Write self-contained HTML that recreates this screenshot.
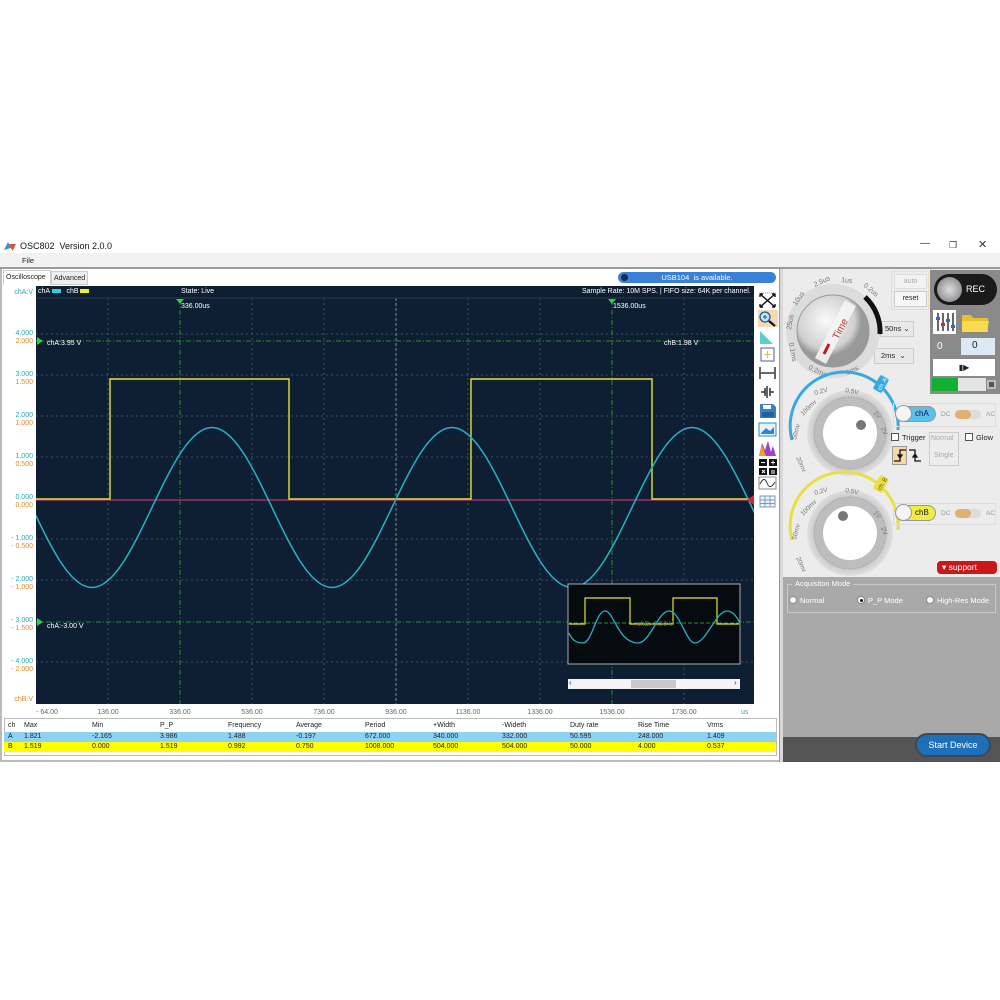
<!DOCTYPE html>
<html><head><meta charset="utf-8">
<style>
*{margin:0;padding:0;box-sizing:border-box}
body{width:1000px;height:1000px;background:#fff;position:relative;overflow:hidden;font-family:"Liberation Sans",sans-serif;font-size:8px;color:#222}
.a{position:absolute;white-space:nowrap}
.yl{position:absolute;right:967px;font-size:7px;text-align:right;line-height:8px}
.c{color:#2aa6b8}.o{color:#e08a2a}
.xl{position:absolute;top:709px;font-size:7px;color:#666;transform:translateX(-50%)}
.tb{position:absolute;left:4px;width:772px;height:10px;font-size:7px;line-height:10px}
.tb span{position:absolute}
</style></head><body>

<svg class="a" style="left:3px;top:240px" width="14" height="12"><path d="M1 10 L5 2 L8 8Z" fill="#3a8fd0"/><path d="M6 4 L13 4 L9.5 11Z" fill="#e0502a"/></svg>
<div class="a" style="left:20px;top:241px;font-size:9px;color:#111">OSC802&nbsp; Version 2.0.0</div>
<div class="a" style="left:920px;top:238px;font-size:10px;color:#333">—</div>
<div class="a" style="left:949px;top:240px;font-size:9px;color:#333">❐</div>
<div class="a" style="left:978px;top:238px;font-size:11px;color:#333">✕</div>
<div class="a" style="left:0;top:253px;width:1000px;height:15px;background:#f2f2f2"></div>
<div class="a" style="left:22px;top:256px;font-size:7.5px">File</div>
<div class="a" style="left:0;top:267px;width:1000px;height:2px;background:#9a9a9a"></div>
<div class="a" style="left:0;top:269px;width:2px;height:493px;background:#bbb"></div>
<div class="a" style="left:3px;top:270px;width:48px;height:15px;background:#fff;border:1px solid #ccc;border-bottom:none;font-size:7px;padding:3px 2px">Oscilloscope</div>
<div class="a" style="left:51px;top:271px;width:37px;height:14px;background:#eee;border:1px solid #ccc;font-size:7px;padding:3px 2px">Advanced</div>
<div class="a" style="left:618px;top:272px;width:158px;height:11px;background:#3a7fd8;border-radius:6px;color:#fff;font-size:7.5px;line-height:11px;text-align:center">USB104&nbsp; is available.</div>
<div class="a" style="left:621px;top:274px;width:7px;height:7px;border-radius:50%;background:#1a2a50"></div>

<svg class="a" style="left:36px;top:286px" width="718" height="418" viewBox="36 286 718 418">
<rect x="36" y="286" width="718" height="418" fill="#0f1f33"/>
<g stroke="#4e5f70" stroke-width="0.8" stroke-dasharray="2 3">
<line x1="108" y1="298" x2="108" y2="704"/><line x1="252" y1="298" x2="252" y2="704"/><line x1="324" y1="298" x2="324" y2="704"/><line x1="396" y1="298" x2="396" y2="704"/><line x1="468" y1="298" x2="468" y2="704"/><line x1="540" y1="298" x2="540" y2="704"/><line x1="684" y1="298" x2="684" y2="704"/>
<line x1="36" y1="334" x2="754" y2="334"/><line x1="36" y1="375" x2="754" y2="375"/><line x1="36" y1="416" x2="754" y2="416"/><line x1="36" y1="457" x2="754" y2="457"/><line x1="36" y1="539" x2="754" y2="539"/><line x1="36" y1="580" x2="754" y2="580"/><line x1="36" y1="662" x2="754" y2="662"/>
</g>
<line x1="396" y1="298" x2="396" y2="704" stroke="#8a98a8" stroke-width="0.8" stroke-dasharray="3 2"/>
<g stroke="#2e8a3a" stroke-width="1" stroke-dasharray="5 2 1 2">
<line x1="180" y1="300" x2="180" y2="704"/><line x1="612" y1="300" x2="612" y2="704"/>
<line x1="36" y1="341" x2="754" y2="341"/><line x1="36" y1="622" x2="754" y2="622"/>
</g>
<line x1="36" y1="298" x2="754" y2="298" stroke="#2a3a4e" stroke-width="1"/>
<line x1="36" y1="500" x2="754" y2="500" stroke="#a0306a" stroke-width="1.5"/>
<path d="M36 499 H110 V379 H289 V499 H471 V379 H652 V499 H754" fill="none" stroke="#e8e030" stroke-width="1.4"/>
<path d="M-28 427.5 C15.7 427.5 48.3 587.5 92 587.5 C135.7 587.5 168.3 427.5 212 427.5 C255.7 427.5 288.3 587.5 332 587.5 C375.7 587.5 408.3 427.5 452 427.5 C495.7 427.5 528.3 587.5 572 587.5 C615.7 587.5 648.3 427.5 692 427.5 C735.7 427.5 768.3 587.5 812 587.5" fill="none" stroke="#2bb0c4" stroke-width="1.5"/>
<path d="M176 299 L184 299 L180 304Z" fill="#2fd040"/><path d="M608 299 L616 299 L612 304Z" fill="#2fd040"/>
<path d="M37 337 L37 345 L43 341Z" fill="#2fd040"/><path d="M37 618 L37 626 L43 622Z" fill="#2fd040"/>
<path d="M754 495 L747 500 L754 505Z" fill="#e02030"/>
<rect x="568" y="584" width="172" height="80" fill="#060b10" stroke="#aaa" stroke-width="1"/>
<line x1="568" y1="623" x2="740" y2="623" stroke="#2e8a3a" stroke-dasharray="4 2"/>
<path d="M569 624 H585 V598 H630 V624 H673 V598 H717 V624 H739" fill="none" stroke="#e8e030" stroke-width="1.2"/>
<path d="M569 633 C572 640 576 643 583 643 C592 643 596 611 605 611 C614 611 618 643 638 643 C650 643 658 611 669 611 C680 611 686 643 695 643 C706 643 716 611 727 611 C733 611 737 617 740 623" fill="none" stroke="#2bb0c4" stroke-width="1.3"/>
<rect x="568" y="679" width="172" height="10" fill="#f4f4f4"/><rect x="631" y="680" width="45" height="8" fill="#c8c8c8"/>
</svg>
<div class="a" style="left:38px;top:288px;font-size:7px;color:#fff">chA <span style="display:inline-block;width:9px;height:4px;background:#2ad0e0"></span>&nbsp;&nbsp; chB <span style="display:inline-block;width:9px;height:4px;background:#f0f020"></span></div>
<div class="a" style="left:181px;top:288px;font-size:7px;color:#fff">State: Live</div>
<div class="a" style="left:582px;top:288px;font-size:7px;color:#fff">Sample Rate: 10M SPS. | FIFO size: 64K per channel.</div>
<div class="a" style="left:181px;top:303px;font-size:7px;color:#fff">336.00us</div>
<div class="a" style="left:613px;top:303px;font-size:7px;color:#fff">1536.00us</div>
<div class="a" style="left:47px;top:340px;font-size:7px;color:#fff">chA:3.95 V</div>
<div class="a" style="left:664px;top:340px;font-size:7px;color:#fff">chB:1.98 V</div>
<div class="a" style="left:47px;top:623px;font-size:7px;color:#fff">chA:-3.00 V</div>
<div class="a" style="left:637px;top:621px;font-size:7px;color:#666">chB:-1.50 V</div>
<div class="a" style="left:569px;top:678px;font-size:8px;color:#333">‹</div><div class="a" style="left:734px;top:678px;font-size:8px;color:#333">›</div>

<div class="yl c" style="top:289px">chA:V</div>
<div class="yl c" style="top:330px">4.000</div><div class="yl o" style="top:338px">2.000</div>
<div class="yl c" style="top:371px">3.000</div><div class="yl o" style="top:379px">1.500</div>
<div class="yl c" style="top:412px">2.000</div><div class="yl o" style="top:420px">1.000</div>
<div class="yl c" style="top:453px">1.000</div><div class="yl o" style="top:461px">0.500</div>
<div class="yl c" style="top:494px">0.000</div><div class="yl o" style="top:502px">0.000</div>
<div class="yl c" style="top:535px">- 1.000</div><div class="yl o" style="top:543px">- 0.500</div>
<div class="yl c" style="top:576px">- 2.000</div><div class="yl o" style="top:584px">- 1.000</div>
<div class="yl c" style="top:617px">- 3.000</div><div class="yl o" style="top:625px">- 1.500</div>
<div class="yl c" style="top:658px">- 4.000</div><div class="yl o" style="top:666px">- 2.000</div>
<div class="yl o" style="top:696px">chB:V</div>
<div class="xl" style="left:47px">- 64.00</div><div class="xl" style="left:108px">136.00</div><div class="xl" style="left:180px">336.00</div><div class="xl" style="left:252px">536.00</div><div class="xl" style="left:324px">736.00</div><div class="xl" style="left:396px">936.00</div><div class="xl" style="left:468px">1136.00</div><div class="xl" style="left:540px">1336.00</div><div class="xl" style="left:612px">1536.00</div><div class="xl" style="left:684px">1736.00</div>
<div class="a" style="left:741px;top:709px;font-size:7px;color:#2aa6b8">us</div>

<svg class="a" style="left:757px;top:290px" width="22" height="222" viewBox="757 290 22 222">
<line x1="759" y1="293" x2="777" y2="293" stroke="#999" stroke-dasharray="1 1"/>
<g stroke="#111" stroke-width="1.4" fill="none"><path d="M760 294 L775 307 M775 294 L760 307"/><path d="M760 294h3M760 294v3M775 294h-3M775 294v3M760 307h3M760 307v-3M775 307h-3M775 307v-3"/></g>
<rect x="758" y="310" width="20" height="17" fill="#f8d8b0"/>
<circle cx="765" cy="317" r="5" fill="#bfe4f8" stroke="#1a5a9a" stroke-width="1.3"/><path d="M769 321 L775 326" stroke="#111" stroke-width="2.2"/><path d="M763 317h4M765 315v4" stroke="#1a5a9a"/>
<path d="M760 344 V331 L773 344Z" fill="#5ccdd0"/>
<rect x="761" y="348" width="13" height="13" fill="none" stroke="#7070c8" stroke-width="1.2"/><path d="M767.5 351v7M764 354.5h7" stroke="#e0c040"/>
<g stroke="#111" stroke-width="1.3"><path d="M760 367v12M775 367v12M761 373h13"/><path d="M767 386v12M761 392h4M770 392h4"/><path d="M765 388v8M770 388v8" /></g>
<path d="M760 404h13l3 3v11h-16z" fill="#3a80c8"/><rect x="763" y="405" width="8" height="4" fill="#fff"/><rect x="762" y="412" width="12" height="5" fill="#2060a0"/>
<rect x="759" y="423" width="17" height="13" fill="#e8f4fc" stroke="#2a8ad0"/><path d="M761 433 L766 428 L770 431 L774 427 V434 H761Z" fill="#2a8ad0"/>
<path d="M759 456 L762 443 L765 450 L768 441 L771 452 L773 446 L776 456Z" fill="#a040c8"/><path d="M759 456 L762 445 L766 456Z" fill="#f0a020"/>
<g fill="#111"><rect x="759" y="459" width="8" height="7"/><rect x="769" y="459" width="8" height="7"/><rect x="759" y="468" width="8" height="7"/><rect x="769" y="468" width="8" height="7"/></g>
<path d="M761 462.5h4M771 462.5h4M773 460.5v4M762 470l3 3M765 470l-3 3M771 471h4M771 473h4" stroke="#fff"/>
<rect x="759" y="477" width="17" height="12" fill="none" stroke="#888"/><path d="M760 484 C763 478 765 478 767 483 C769 488 771 488 775 482" fill="none" stroke="#333"/>
<rect x="760" y="496" width="15" height="11" fill="#eef4fa" stroke="#7a9ac0"/><path d="M760 500h15M760 503.5h15M765 496v11M770 496v11" stroke="#7a9ac0"/>
</svg>

<div class="a" style="left:4px;top:718px;width:773px;height:38px;border:1px solid #bbb;background:#fff"></div>
<div class="tb" style="top:721px"><span style="left:4px">ch</span><span style="left:20px">Max</span><span style="left:88px">Min</span><span style="left:156px">P_P</span><span style="left:224px">Frequency</span><span style="left:292px">Average</span><span style="left:361px">Period</span><span style="left:429px">+Width</span><span style="left:498px">-Wideth</span><span style="left:566px">Duty rate</span><span style="left:634px">Rise Time</span><span style="left:703px">Vrms</span></div>
<div class="tb" style="top:732px;background:#8ed2f4"><span style="left:4px">A</span><span style="left:20px">1.821</span><span style="left:88px">-2.165</span><span style="left:156px">3.986</span><span style="left:224px">1.488</span><span style="left:292px">-0.197</span><span style="left:361px">672.000</span><span style="left:429px">340.000</span><span style="left:498px">332.000</span><span style="left:566px">50.595</span><span style="left:634px">248.000</span><span style="left:703px">1.409</span></div>
<div class="tb" style="top:742px;background:#ffff00"><span style="left:4px">B</span><span style="left:20px">1.519</span><span style="left:88px">0.000</span><span style="left:156px">1.519</span><span style="left:224px">0.992</span><span style="left:292px">0.750</span><span style="left:361px">1008.000</span><span style="left:429px">504.000</span><span style="left:498px">504.000</span><span style="left:566px">50.000</span><span style="left:634px">4.000</span><span style="left:703px">0.537</span></div>
<div class="a" style="left:0;top:760px;width:782px;height:2px;background:#bbb"></div>

<div class="a" style="left:779px;top:269px;width:4px;height:493px;background:#d8d8d8;border-left:1px solid #999"></div>
<div class="a" style="left:783px;top:269px;width:217px;height:308px;background:#ececec"></div>
<div class="a" style="left:783px;top:577px;width:217px;height:160px;background:#a9a9a9"></div>
<div class="a" style="left:783px;top:737px;width:217px;height:25px;background:#555"></div>
<div class="a" style="left:915px;top:733px;width:76px;height:24px;border-radius:12px;background:#1e6fb8;border:2px solid #3a4a5a;color:#fff;font-size:9px;line-height:20px;text-align:center">Start Device</div>
<div class="a" style="left:787px;top:584px;width:209px;height:29px;border:1px solid #c8c8c8"></div>
<div class="a" style="left:792px;top:579px;background:#a9a9a9;color:#fff;font-size:7.5px;padding:0 3px">Acquisiton Mode</div>
<div class="a" style="left:789px;top:596px;width:8px;height:8px;border-radius:50%;background:#fff;border:1px solid #888"></div>
<div class="a" style="left:800px;top:596px;color:#fff;font-size:7.5px">Normal</div>
<div class="a" style="left:857px;top:596px;width:8px;height:8px;border-radius:50%;background:#fff;border:1px solid #888"><div style="margin:1.5px;width:3px;height:3px;border-radius:50%;background:#111"></div></div>
<div class="a" style="left:868px;top:596px;color:#fff;font-size:7.5px">P_P Mode</div>
<div class="a" style="left:926px;top:596px;width:8px;height:8px;border-radius:50%;background:#fff;border:1px solid #888"></div>
<div class="a" style="left:937px;top:596px;color:#fff;font-size:7.5px">High-Res Mode</div>

<div class="a" style="left:930px;top:270px;width:70px;height:124px;background:#8a8a8a"></div>
<div class="a" style="left:934px;top:274px;width:63px;height:31px;border-radius:16px;background:#1a1a1a"></div>
<div class="a" style="left:937px;top:277px;width:25px;height:25px;border-radius:50%;background:radial-gradient(#ddd,#777)"></div>
<div class="a" style="left:966px;top:284px;color:#fff;font-size:9px">REC</div>
<div class="a" style="left:933px;top:310px;width:23px;height:24px;background:#fff"></div>
<svg class="a" style="left:934px;top:311px" width="22" height="22"><g stroke="#333" stroke-width="1.5"><path d="M4 2v18M9 2v18M14 2v18M19 2v18"/></g><rect x="2" y="6" width="4" height="3" fill="#2a6ad0"/><rect x="7" y="12" width="4" height="3" fill="#d02a2a"/><rect x="12" y="8" width="4" height="3" fill="#2a6ad0"/><rect x="17" y="14" width="4" height="3" fill="#2a6ad0"/></svg>
<svg class="a" style="left:961px;top:311px" width="30" height="24"><path d="M1 4h9l2 3h15v14H1z" fill="#e8c030"/><path d="M1 10h27l-2 11H1z" fill="#f8dc50"/></svg>
<div class="a" style="left:937px;top:341px;color:#fff;font-size:10px">0</div>
<div class="a" style="left:961px;top:338px;width:34px;height:17px;background:#dce8f4;font-size:10px;padding:2px 0 0 11px">0</div>
<div class="a" style="left:933px;top:359px;width:62px;height:17px;background:#fff;font-size:8px;text-align:center;line-height:17px">▮▶</div>
<div class="a" style="left:932px;top:378px;width:26px;height:13px;background:#11b030"></div>
<div class="a" style="left:958px;top:378px;width:28px;height:13px;background:#e4e4e4"></div>
<div class="a" style="left:987px;top:380px;width:9px;height:9px;background:#555;border:2px solid #bbb"></div>
<div class="a" style="left:891px;top:271px;width:38px;height:39px;border:1px solid #f0dcc0"></div>
<div class="a" style="left:894px;top:274px;width:33px;height:15px;border:1px solid #ddd;background:#f2f2f2;color:#aaa;font-size:7px;text-align:center;line-height:13px">auto</div>
<div class="a" style="left:894px;top:291px;width:33px;height:16px;border:1px solid #ccc;background:#f6f6f6;font-size:7px;text-align:center;line-height:14px">reset</div>
<div class="a" style="left:880px;top:321px;width:34px;height:16px;border:1px solid #ccc;background:#e8e8e8;font-size:7.5px;line-height:14px;padding-left:4px">50ns ⌄</div>
<div class="a" style="left:874px;top:348px;width:40px;height:16px;border:1px solid #ccc;background:#e8e8e8;font-size:7.5px;line-height:14px;padding-left:6px">2ms &nbsp;⌄</div>

<svg class="a" style="left:783px;top:269px" width="145" height="310" viewBox="783 269 145 310">
<defs>
<radialGradient id="g1" cx="0.4" cy="0.35"><stop offset="0" stop-color="#fafafa"/><stop offset="0.8" stop-color="#d0d0d0"/><stop offset="1" stop-color="#999"/></radialGradient>
<radialGradient id="g2"><stop offset="0.7" stop-color="#b8b8b8"/><stop offset="1" stop-color="#e0e0e0"/></radialGradient>
</defs>
<circle cx="833" cy="331" r="47" fill="#dcdcdc"/>
<path d="M865 297 A47 47 0 0 1 880 334" stroke="#111" stroke-width="5" fill="none"/>
<circle cx="833" cy="331" r="36" fill="url(#g1)" stroke="#999"/>
<path d="M815 358 L845 300 L856 306 L826 364Z" fill="#f4f4f4" opacity="0.9"/>
<text x="0" y="0" transform="translate(838 340) rotate(-62)" font-size="10" fill="#c03030" font-family="Liberation Sans">Time</text>
<path d="M824 354 L829 344" stroke="#c01818" stroke-width="3"/>
<g font-size="7" fill="#777" font-family="Liberation Sans">
<text transform="translate(796 306) rotate(-55)">10us</text>
<text transform="translate(815 287) rotate(-25)">2.5us</text>
<text transform="translate(841 282) rotate(5)">1us</text>
<text transform="translate(863 286) rotate(40)">0.2us</text>
<text transform="translate(791 330) rotate(-80)">25us</text>
<text transform="translate(789 343) rotate(80)">0.1ms</text>
<text transform="translate(808 369) rotate(25)">0.2ms</text>
<text transform="translate(847 375) rotate(-25)">1ms</text>
</g>
<path d="M792 440 A54 54 0 1 1 898 430" stroke="#3aa8e0" stroke-width="3" fill="none"/>
<rect x="873" y="379" width="16" height="10" rx="2" fill="#3aa8e0" transform="rotate(-60 881 384)"/>
<text x="875" y="387" font-size="6" fill="#fff" transform="rotate(-60 881 384)">ch. A</text>
<circle cx="850" cy="433" r="43" fill="url(#g2)"/>
<circle cx="850" cy="433" r="36" fill="#bdbdbd" stroke="#999" stroke-dasharray="1 1.5"/>
<circle cx="850" cy="433" r="27" fill="#fff"/>
<circle cx="861" cy="425" r="5" fill="#777"/>
<path d="M792 540 A54 54 0 1 1 898 530" stroke="#e8e040" stroke-width="3" fill="none"/>
<rect x="873" y="479" width="16" height="10" rx="2" fill="#e8e040" transform="rotate(-60 881 484)"/>
<text x="875" y="487" font-size="6" fill="#555" transform="rotate(-60 881 484)">ch. B</text>
<circle cx="850" cy="533" r="43" fill="url(#g2)"/>
<circle cx="850" cy="533" r="36" fill="#bdbdbd" stroke="#999" stroke-dasharray="1 1.5"/>
<circle cx="850" cy="533" r="27" fill="#fff"/>
<circle cx="843" cy="516" r="5" fill="#777"/>
<g font-size="6.5" fill="#777" font-family="Liberation Sans">
<text transform="translate(796 440) rotate(-75)">50mv</text><text transform="translate(803 416) rotate(-45)">100mv</text><text transform="translate(815 395) rotate(-15)">0.2V</text><text transform="translate(845 392) rotate(10)">0.5V</text><text transform="translate(873 413) rotate(50)">1V</text><text transform="translate(881 428) rotate(70)">2V</text><text transform="translate(796 458) rotate(65)">20mv</text>
<text transform="translate(796 540) rotate(-75)">50mv</text><text transform="translate(803 516) rotate(-45)">100mv</text><text transform="translate(815 495) rotate(-15)">0.2V</text><text transform="translate(845 492) rotate(10)">0.5V</text><text transform="translate(873 513) rotate(50)">1V</text><text transform="translate(881 528) rotate(70)">2V</text><text transform="translate(796 558) rotate(65)">20mv</text>
</g>
</svg>

<div class="a" style="left:893px;top:403px;width:103px;height:24px;border:1px solid #ddd"></div>
<div class="a" style="left:895px;top:406px;width:41px;height:16px;border-radius:8px;background:#5ac0ec;border:1px solid #999"></div>
<div class="a" style="left:895px;top:405px;width:17px;height:17px;border-radius:50%;background:#f4f4f4;border:1px solid #999"></div>
<div class="a" style="left:915px;top:409px;font-size:8px;color:#114">chA</div>
<div class="a" style="left:941px;top:411px;font-size:6.5px;color:#999">DC</div>
<div class="a" style="left:955px;top:410px;width:26px;height:9px;border-radius:5px;background:#ddd"></div>
<div class="a" style="left:955px;top:410px;width:16px;height:9px;border-radius:5px;background:#e0b070"></div>
<div class="a" style="left:986px;top:411px;font-size:6.5px;color:#999">AC</div>
<div class="a" style="left:891px;top:433px;width:8px;height:8px;border:1px solid #555;background:#fff"></div>
<div class="a" style="left:902px;top:433px;font-size:7.5px">Trigger</div>
<div class="a" style="left:929px;top:432px;width:30px;height:34px;border:1px solid #ccc"></div>
<div class="a" style="left:931px;top:435px;font-size:7px;color:#aaa">Normal</div>
<div class="a" style="left:934px;top:452px;font-size:7px;color:#aaa">Single</div>
<div class="a" style="left:965px;top:433px;width:8px;height:8px;border:1px solid #555;background:#fff"></div>
<div class="a" style="left:976px;top:433px;font-size:7.5px">Glow</div>
<div class="a" style="left:892px;top:446px;width:15px;height:19px;background:#f8d8a8;border:1px solid #999"></div>
<svg class="a" style="left:892px;top:446px" width="32" height="19"><path d="M2 15h6V4h6M8 12l-2 -3h4z" stroke="#111" fill="none" stroke-width="1.3"/><path d="M17 4h6v11h6M23 8l-2 3h4z" stroke="#111" fill="none" stroke-width="1.3"/></svg>
<div class="a" style="left:893px;top:503px;width:103px;height:22px;border:1px solid #ddd"></div>
<div class="a" style="left:895px;top:505px;width:41px;height:16px;border-radius:8px;background:#f0ec40;border:1px solid #999"></div>
<div class="a" style="left:895px;top:504px;width:17px;height:17px;border-radius:50%;background:#f4f4f4;border:1px solid #999"></div>
<div class="a" style="left:915px;top:508px;font-size:8px;color:#114">chB</div>
<div class="a" style="left:941px;top:510px;font-size:6.5px;color:#999">DC</div>
<div class="a" style="left:955px;top:509px;width:26px;height:9px;border-radius:5px;background:#ddd"></div>
<div class="a" style="left:955px;top:509px;width:16px;height:9px;border-radius:5px;background:#e0b070"></div>
<div class="a" style="left:986px;top:510px;font-size:6.5px;color:#999">AC</div>
<div class="a" style="left:937px;top:561px;width:60px;height:13px;border-radius:4px;background:#c81818;color:#fff;font-size:8.5px;line-height:13px;padding-left:5px">▾ support</div>
</body></html>
